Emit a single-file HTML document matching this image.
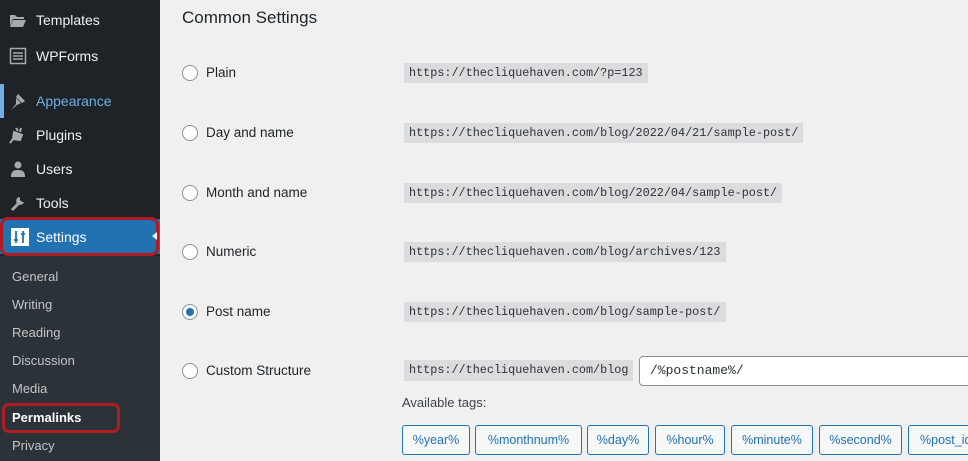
<!DOCTYPE html>
<html><head><style>
*{margin:0;padding:0;box-sizing:border-box}
body{width:968px;height:461px;overflow:hidden;background:#f0f0f1;font-family:"Liberation Sans",sans-serif;position:relative;color:#1d2327}
#sb{position:absolute;left:0;top:0;width:160px;height:461px;background:#1d2327}
#sub{position:absolute;left:0;top:256px;width:160px;height:205px;background:#2c3338}
.mi{position:absolute;left:36px;font-size:14px;color:#f0f0f1}
.ic{position:absolute;left:9px;width:18px;height:18px}
.si{position:absolute;left:12px;font-size:13px;color:#c3c4c7}
.m{position:absolute;font-family:"Liberation Mono",monospace;font-size:11.8px;background:#dcdcde;color:#2c3338;padding:0 5px;height:20px;line-height:20px;left:404px}
.lb{position:absolute;left:206px;font-size:13.5px;color:#1d2327}
.r{position:absolute;left:182px;width:16px;height:16px;border:1px solid #8c8f94;border-radius:50%;background:#fff}
.tag{position:absolute;top:425px;height:30px;border:1px solid #2271b1;border-radius:3px;background:#f6f7f7;color:#2271b1;font-size:12.5px;line-height:28px;text-align:center;white-space:nowrap;overflow:hidden}
</style></head><body>
<div id="sb"></div>
<div id="sub"></div>
<svg class="ic" style="top:11px" viewBox="0 0 18 18"><path d="M1 4h5l2 2h7v2H4l-3 7z M4 9h13l-3 7H1z" fill="#a7aaad"/></svg>
<div class="mi" style="top:12px">Templates</div>
<svg class="ic" style="top:47px" viewBox="0 0 18 18"><rect x="1.5" y="1.5" width="15" height="15" fill="none" stroke="#a7aaad" stroke-width="1.5"/><path d="M4 6h10M4 9h10M4 12h10" stroke="#a7aaad" stroke-width="1.5"/></svg>
<div class="mi" style="top:48px">WPForms</div>
<div style="position:absolute;left:0;top:84px;width:4px;height:34px;background:#72aee6"></div>
<svg class="ic" style="top:92px" viewBox="0 0 18 18"><path d="M9 2l7 7-3 2-6-6z M7 6l5 5-4 2-6 5 5-6z" fill="#a7aaad"/></svg>
<div class="mi" style="top:93px;color:#72aee6">Appearance</div>
<svg class="ic" style="top:126px" viewBox="0 0 18 18"><path d="M7 2l2 3M12 2l-1 4M5 6l8 3-2 5-7-1zM4 13l-3 4" stroke="#a7aaad" stroke-width="2" fill="#a7aaad"/></svg>
<div class="mi" style="top:127px">Plugins</div>
<svg class="ic" style="top:160px" viewBox="0 0 18 18"><circle cx="9" cy="5" r="3.5" fill="#a7aaad"/><path d="M2 17c0-6 3-7 7-7s7 1 7 7z" fill="#a7aaad"/></svg>
<div class="mi" style="top:161px">Users</div>
<svg class="ic" style="top:194px" viewBox="0 0 18 18"><path d="M3 16l8-8" stroke="#a7aaad" stroke-width="3"/><path d="M10 3a4 4 0 1 0 5 5l-2 0-2-2 0-2z" fill="#a7aaad"/></svg>
<div class="mi" style="top:195px">Tools</div>
<div style="position:absolute;left:0;top:219px;width:160px;height:35px;background:#2271b1"></div>
<div style="position:absolute;left:0;top:217px;width:159px;height:39px;border:3px solid #b11c22;border-radius:8px"></div>
<svg class="ic" style="top:228px;left:11px" viewBox="0 0 18 18"><rect width="18" height="18" fill="#fff"/><path d="M5 3v12M12 3v12M3 12h4M10 6h4" stroke="#2271b1" stroke-width="1.8"/></svg>
<div class="mi" style="top:229px;color:#fff">Settings</div>
<div style="position:absolute;left:152px;top:232px;border:4px solid transparent;border-right:5px solid #f0f0f1;border-left:0"></div>
<div class="si" style="top:269px">General</div>
<div class="si" style="top:297px">Writing</div>
<div class="si" style="top:325px">Reading</div>
<div class="si" style="top:353px">Discussion</div>
<div class="si" style="top:381px">Media</div>
<div class="si" style="top:410px;color:#fff;font-weight:bold">Permalinks</div>
<div style="position:absolute;left:2px;top:403px;width:118px;height:30px;border:3px solid #b11c22;border-radius:7px"></div>
<div class="si" style="top:438px">Privacy</div>

<div style="position:absolute;left:182px;top:8px;font-size:17px;color:#1d2327">Common Settings</div>

<div class="r" style="top:65px"></div><div class="lb" style="top:65px">Plain</div><div class="m" style="top:63px">https://thecliquehaven.com/?p=123</div>
<div class="r" style="top:125px"></div><div class="lb" style="top:125px">Day and name</div><div class="m" style="top:123px">https://thecliquehaven.com/blog/2022/04/21/sample-post/</div>
<div class="r" style="top:185px"></div><div class="lb" style="top:185px">Month and name</div><div class="m" style="top:183px">https://thecliquehaven.com/blog/2022/04/sample-post/</div>
<div class="r" style="top:244px"></div><div class="lb" style="top:244px">Numeric</div><div class="m" style="top:242px">https://thecliquehaven.com/blog/archives/123</div>
<div class="r" style="top:304px"></div><div style="position:absolute;left:186px;top:308px;width:8px;height:8px;border-radius:50%;background:#2271b1"></div><div class="lb" style="top:304px">Post name</div><div class="m" style="top:302px">https://thecliquehaven.com/blog/sample-post/</div>
<div class="r" style="top:363px"></div><div class="lb" style="top:363px">Custom Structure</div><div class="m" style="top:360px;height:21px;line-height:21px">https://thecliquehaven.com/blog</div>
<div style="position:absolute;left:639px;top:356px;width:340px;height:30px;border:1px solid #8c8f94;border-radius:4px;background:#fff;font-family:'Liberation Mono',monospace;font-size:13px;line-height:28px;padding-left:10px;color:#2c3338">/%postname%/</div>
<div style="position:absolute;left:402px;top:395px;font-size:13px;color:#3c434a">Available tags:</div>
<div class="tag" style="left:402px;width:68px">%year%</div>
<div class="tag" style="left:475px;width:107px">%monthnum%</div>
<div class="tag" style="left:587px;width:62px">%day%</div>
<div class="tag" style="left:655px;width:70px">%hour%</div>
<div class="tag" style="left:731px;width:82px">%minute%</div>
<div class="tag" style="left:819px;width:83px">%second%</div>
<div class="tag" style="left:908px;width:80px;text-align:left;padding-left:11px">%post_id%</div>
</body></html>
